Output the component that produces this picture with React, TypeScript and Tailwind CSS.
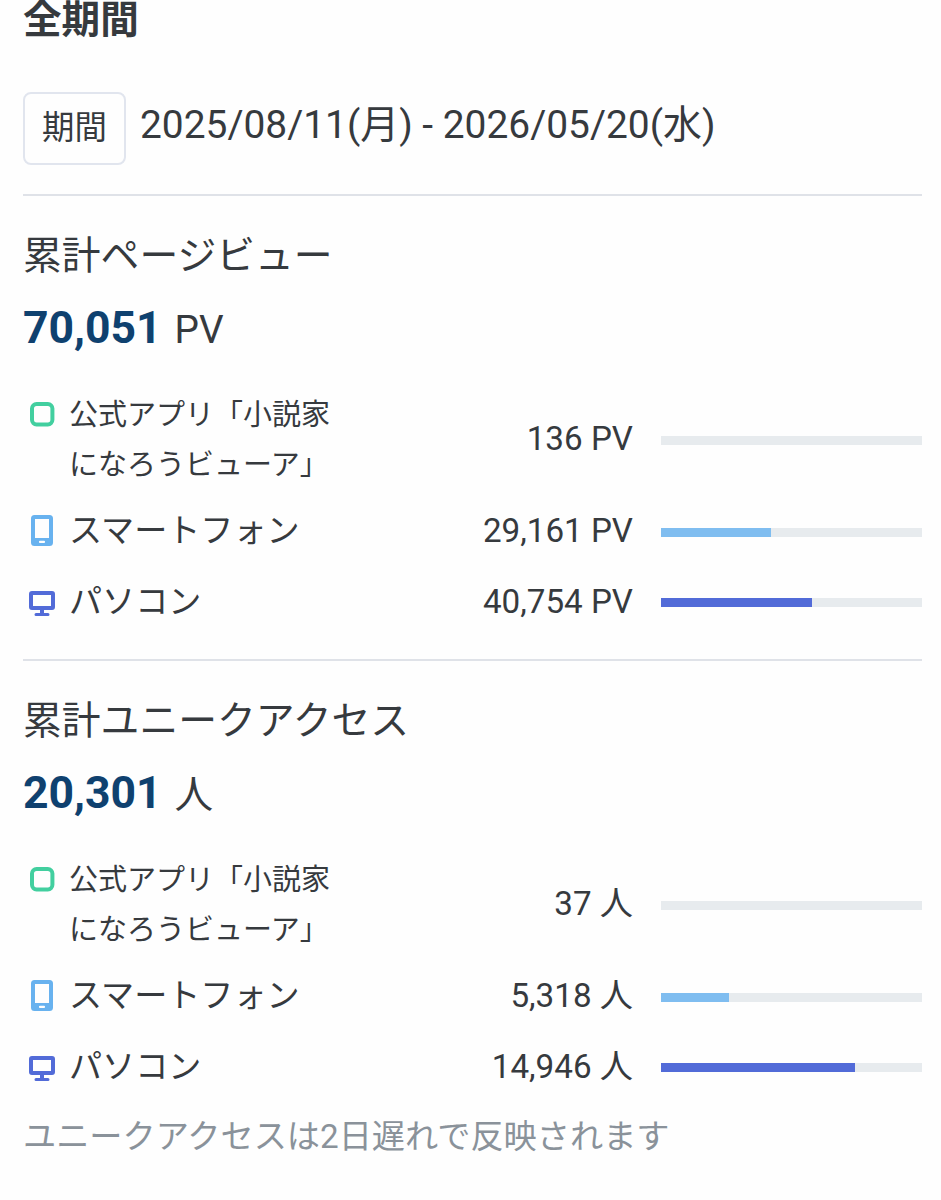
import type { ReactNode } from "react";

type Device = "app" | "phone" | "pc";

interface Row {
    device: Device;
    value: string;
    percent: number;
}

interface Stats {
    title: string;
    total: string;
    unit: string;
    rows: Row[];
}

const pageViews: Stats = {
    title: "累計ページビュー",
    total: "70,051",
    unit: "PV",
    rows: [
        { device: "app", value: "136", percent: 0 },
        { device: "phone", value: "29,161", percent: 42 },
        { device: "pc", value: "40,754", percent: 58 },
    ],
};

const uniqueAccess: Stats = {
    title: "累計ユニークアクセス",
    total: "20,301",
    unit: "人",
    rows: [
        { device: "app", value: "37", percent: 0 },
        { device: "phone", value: "5,318", percent: 26.2 },
        { device: "pc", value: "14,946", percent: 74.2 },
    ],
};

const labels: Record<Device, ReactNode> = {
    app: (
        <>
            公式アプリ「小説家
            <br />
            になろうビューア」
        </>
    ),
    phone: "スマートフォン",
    pc: "パソコン",
};

const barColors: Record<Device, string> = {
    app: "bg-[#42cf9f]",
    phone: "bg-[#7fbdf0]",
    pc: "bg-[#526bd8]",
};

const barOffsets: Record<Device, string> = {
    app: "pt-[47px]",
    phone: "pt-8",
    pc: "pt-[31px]",
};

function DeviceIcon({ device }: { device: Device }) {
    if (device === "app") {
        return (
            <svg className="mt-[13px] ml-[7px] h-[25px] w-[25px]" viewBox="0 0 25 25" fill="none">
                <rect x="2" y="2" width="20.4" height="20.4" rx="4.6" stroke="#42cf9f" strokeWidth="4" />
            </svg>
        );
    }
    if (device === "phone") {
        return (
            <svg className="mt-[19px] ml-2 h-[31px] w-[22px]" viewBox="0 0 22 31">
                <path
                    fill="#68b2ef"
                    fillRule="evenodd"
                    d="M3.5 0h15A3.5 3.5 0 0 1 22 3.500v24a3.500 3.500 0 0 1-3.500 3.500h-15A3.500 3.500 0 0 1 0 27.500v-24A3.500 3.500 0 0 1 3.500 0ZM4 4v19h14V4ZM9 25.800a1.100 1.100 0 0 0 0 2.200h4a1.100 1.100 0 0 0 0-2.200Z"
                />
            </svg>
        );
    }
    return (
        <svg className="mt-[24px] ml-1.5 h-[26px] w-[26px]" viewBox="0 0 26 26">
            <path
                fill="#526bd8"
                fillRule="evenodd"
                d="M3 0h20a3 3 0 0 1 3 3v13a3 3 0 0 1-3 3h-8v3h4a1.500 1.500 0 0 1 0 3H7a1.500 1.500 0 0 1 0-3h4v-3H3a3 3 0 0 1-3-3V3a3 3 0 0 1 3-3ZM4 4v11h18V4Z"
            />
        </svg>
    );
}

function StatsRow({ row, unit }: { row: Row; unit: string }) {
    const isApp = row.device === "app";

    return (
        <div className={isApp ? "flex h-[107px]" : "flex h-[71px]"}>
            <div className="w-[46px] shrink-0">
                <DeviceIcon device={row.device} />
            </div>
            <div
                className={
                    isApp
                        ? "w-[300px] pt-px text-[29px] leading-[50px]"
                        : "w-[300px] text-[33.1px] leading-[69px]"
                }
            >
                {labels[row.device]}
            </div>
            <div
                className={
                    isApp
                        ? "flex-1 text-right text-[33.2px] leading-[100px]"
                        : "flex-1 text-right text-[33.2px] leading-[70px]"
                }
            >
                {row.value} {unit}
            </div>
            <div className={`ml-7 w-[261px] ${barOffsets[row.device]}`}>
                <div className="h-[8.5px] bg-[#e7ebee]">
                    <div className={`h-full ${barColors[row.device]}`} style={{ width: `${row.percent}%` }} />
                </div>
            </div>
        </div>
    );
}

function StatsSection({ stats }: { stats: Stats }) {
    return (
        <section className="h-[465px] border-t-2 border-[#dfe2e8] pt-[29px]">
            <h2 className="h-[62px] text-[38.8px] leading-[62px]">{stats.title}</h2>
            <p className="flex h-[102px] items-baseline gap-[13px] leading-[83px]">
                <span className="text-[44.5px] font-bold text-[#0f416f]">{stats.total}</span>
                <span className="text-[38.7px]">{stats.unit}</span>
            </p>
            {stats.rows.map((row) => (
                <StatsRow key={row.device} row={row} unit={stats.unit} />
            ))}
        </section>
    );
}

export default function App() {
    return (
        <main
            lang="ja"
            className="h-[1200px] overflow-hidden bg-[#fefefe] pr-[19px] pl-[23px] font-[Roboto,'Noto_Sans_CJK_JP',sans-serif] text-[#363a3e]"
        >
            <h1 className="h-[92px] text-[38.6px] leading-[40px] font-bold">全期間</h1>
            <div className="flex h-[102px] items-start">
                <span className="h-[73px] w-[103px] rounded-lg border-2 border-[#e1e5ee] text-center text-[32.4px] leading-[69px]">
                    期間
                </span>
                <span className="ml-[14px] text-[38.9px] leading-[66px]">2025/08/11(月) - 2026/05/20(水)</span>
            </div>
            <StatsSection stats={pageViews} />
            <StatsSection stats={uniqueAccess} />
            <p className="-mt-[15px] text-[33.2px] leading-[56px] text-[#8a929a]">
                ユニークアクセスは2日遅れで反映されます
            </p>
        </main>
    );
}
